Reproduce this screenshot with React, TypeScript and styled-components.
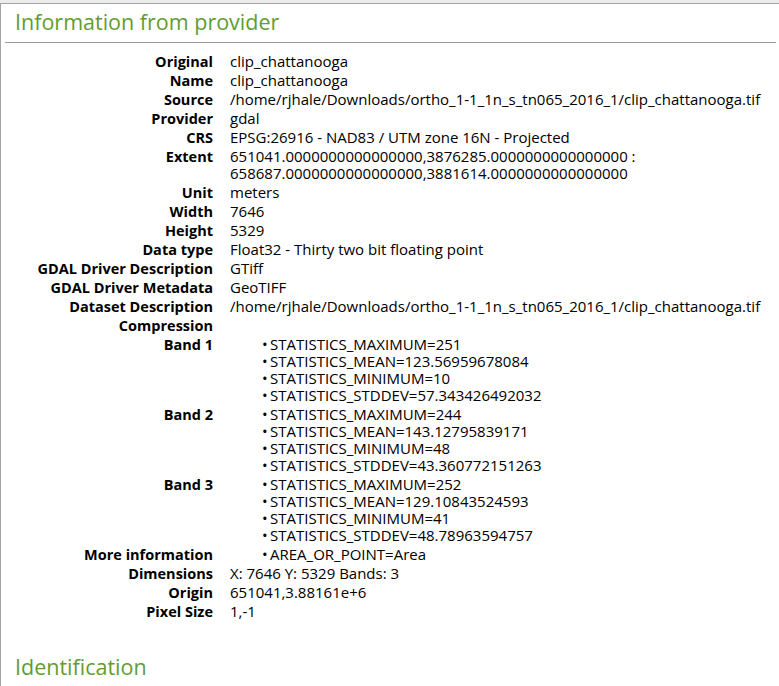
import { FC, Fragment } from 'react';
import styled, { createGlobalStyle } from 'styled-components';

const GlobalStyle = createGlobalStyle`
  html, body {
    margin: 0;
    padding: 0;
    background: #edeceb;
  }
  body {
    font-family: "Open Sans", "DejaVu Sans", sans-serif;
    color: #000;
  }
`;

const Panel = styled.div`
  margin-top: 3px;
  background: #fff;
  border-top: 1px solid #a3a3a3;
  border-left: 1px solid #a3a3a3;
  min-height: 682px;
  padding-bottom: 20px;
`;

const SectionTitle = styled.h2<{ $top?: number }>`
  margin: ${p => p.$top ?? 0}px 3px 0 4px;
  padding: 4px 0 7px 10px;
  font-size: 21.5px;
  font-weight: 400;
  line-height: 27px;
  color: #5f9d2f;
  border-bottom: 1px solid #9a9a9a;
`;

const InfoTable = styled.div`
  display: grid;
  grid-template-columns: 207px auto;
  column-gap: 17px;
  padding: 9px 0 0 5px;
  font-size: 15px;
  line-height: 17px;
`;

const Label = styled.div`
  font-size: 14.5px;
  font-weight: 700;
  text-align: right;
  padding: 1px 0;
  white-space: nowrap;
`;

const Value = styled.div`
  padding: 1px 0;
  white-space: nowrap;
`;

const BulletList = styled.ul`
  list-style: none;
  margin: 0;
  padding: 0 0 0 32px;
`;

const Bullet = styled.li`
  &::before {
    content: "•";
    display: inline-block;
    width: 8px;
  }
`;

type Row = { label: string; value?: string; lines?: string[]; bullets?: string[] };

const rows: Row[] = [
  { label: 'Original', value: 'clip_chattanooga' },
  { label: 'Name', value: 'clip_chattanooga' },
  { label: 'Source', value: '/home/rjhale/Downloads/ortho_1-1_1n_s_tn065_2016_1/clip_chattanooga.tif' },
  { label: 'Provider', value: 'gdal' },
  { label: 'CRS', value: 'EPSG:26916 - NAD83 / UTM zone 16N - Projected' },
  {
    label: 'Extent',
    lines: [
      '651041.0000000000000000,3876285.0000000000000000 :',
      '658687.0000000000000000,3881614.0000000000000000',
    ],
  },
  { label: 'Unit', value: 'meters' },
  { label: 'Width', value: '7646' },
  { label: 'Height', value: '5329' },
  { label: 'Data type', value: 'Float32 - Thirty two bit floating point' },
  { label: 'GDAL Driver Description', value: 'GTiff' },
  { label: 'GDAL Driver Metadata', value: 'GeoTIFF' },
  { label: 'Dataset Description', value: '/home/rjhale/Downloads/ortho_1-1_1n_s_tn065_2016_1/clip_chattanooga.tif' },
  { label: 'Compression', value: '' },
  {
    label: 'Band 1',
    bullets: [
      'STATISTICS_MAXIMUM=251',
      'STATISTICS_MEAN=123.56959678084',
      'STATISTICS_MINIMUM=10',
      'STATISTICS_STDDEV=57.343426492032',
    ],
  },
  {
    label: 'Band 2',
    bullets: [
      'STATISTICS_MAXIMUM=244',
      'STATISTICS_MEAN=143.12795839171',
      'STATISTICS_MINIMUM=48',
      'STATISTICS_STDDEV=43.360772151263',
    ],
  },
  {
    label: 'Band 3',
    bullets: [
      'STATISTICS_MAXIMUM=252',
      'STATISTICS_MEAN=129.10843524593',
      'STATISTICS_MINIMUM=41',
      'STATISTICS_STDDEV=48.78963594757',
    ],
  },
  { label: 'More information', bullets: ['AREA_OR_POINT=Area'] },
  { label: 'Dimensions', value: 'X: 7646 Y: 5329 Bands: 3' },
  { label: 'Origin', value: '651041,3.88161e+6' },
  { label: 'Pixel Size', value: '1,-1' },
];

const App: FC = () => {
  return (
    <>
      <GlobalStyle />
      <Panel>
        <SectionTitle>Information from provider</SectionTitle>
        <InfoTable>
          {rows.map(r => (
            <Fragment key={r.label}>
              <Label>{r.label}</Label>
              <Value>
                {r.value}
                {r.lines && r.lines.map((l, i) => <div key={i}>{l}</div>)}
                {r.bullets && (
                  <BulletList>
                    {r.bullets.map(b => (
                      <Bullet key={b}>{b}</Bullet>
                    ))}
                  </BulletList>
                )}
              </Value>
            </Fragment>
          ))}
        </InfoTable>
        <SectionTitle $top={28}>Identification</SectionTitle>
      </Panel>
    </>
  );
};

export default App;
